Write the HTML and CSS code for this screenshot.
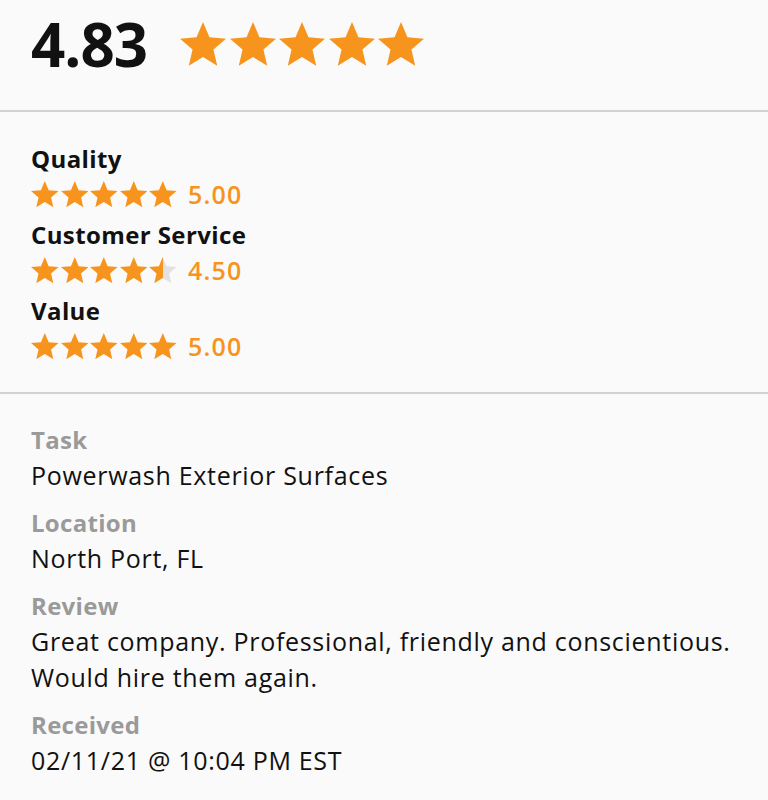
FILE: index.html
```html
<!DOCTYPE html>
<html lang="en">
<head>
<meta charset="utf-8">
<title>Review</title>
<link rel="stylesheet" href="styles.css">
</head>
<body>
<svg width="0" height="0" class="defs" aria-hidden="true">
  <defs>
    <path id="star" d="M12 17.27L18.18 21l-1.64-7.03L22 9.24l-7.19-.61L12 2 9.19 8.63 2 9.24l5.46 4.73L5.82 21z"/>
    <linearGradient id="half" x1="0" x2="1" y1="0" y2="0">
      <stop offset="50%" stop-color="#f7941d"/>
      <stop offset="50%" stop-color="#e2e2e2"/>
    </linearGradient>
  </defs>
</svg>
<main class="review">
  <section class="summary">
    <div class="score">4.83</div>
    <div class="stars stars-lg">
      <svg viewBox="2 2 20 19"><use href="#star"/></svg>
      <svg viewBox="2 2 20 19"><use href="#star"/></svg>
      <svg viewBox="2 2 20 19"><use href="#star"/></svg>
      <svg viewBox="2 2 20 19"><use href="#star"/></svg>
      <svg viewBox="2 2 20 19"><use href="#star"/></svg>
    </div>
  </section>

  <section class="categories">
    <div class="cat">
      <div class="cat-name">Quality</div>
      <div class="cat-row">
        <div class="stars stars-sm">
          <svg viewBox="2 2 20 19"><use href="#star"/></svg>
          <svg viewBox="2 2 20 19"><use href="#star"/></svg>
          <svg viewBox="2 2 20 19"><use href="#star"/></svg>
          <svg viewBox="2 2 20 19"><use href="#star"/></svg>
          <svg viewBox="2 2 20 19"><use href="#star"/></svg>
        </div>
        <span class="cat-value">5.00</span>
      </div>
    </div>
    <div class="cat">
      <div class="cat-name">Customer Service</div>
      <div class="cat-row">
        <div class="stars stars-sm">
          <svg viewBox="2 2 20 19"><use href="#star"/></svg>
          <svg viewBox="2 2 20 19"><use href="#star"/></svg>
          <svg viewBox="2 2 20 19"><use href="#star"/></svg>
          <svg viewBox="2 2 20 19"><use href="#star"/></svg>
          <svg viewBox="2 2 20 19" class="half"><use href="#star"/></svg>
        </div>
        <span class="cat-value">4.50</span>
      </div>
    </div>
    <div class="cat">
      <div class="cat-name">Value</div>
      <div class="cat-row">
        <div class="stars stars-sm">
          <svg viewBox="2 2 20 19"><use href="#star"/></svg>
          <svg viewBox="2 2 20 19"><use href="#star"/></svg>
          <svg viewBox="2 2 20 19"><use href="#star"/></svg>
          <svg viewBox="2 2 20 19"><use href="#star"/></svg>
          <svg viewBox="2 2 20 19"><use href="#star"/></svg>
        </div>
        <span class="cat-value">5.00</span>
      </div>
    </div>
  </section>

  <section class="details">
    <div class="field">
      <div class="label">Task</div>
      <div class="value">Powerwash Exterior Surfaces</div>
    </div>
    <div class="field">
      <div class="label">Location</div>
      <div class="value">North Port, FL</div>
    </div>
    <div class="field">
      <div class="label">Review</div>
      <div class="value">Great company. Professional, friendly and conscientious. Would hire them again.</div>
    </div>
    <div class="field">
      <div class="label">Received</div>
      <div class="value">02/11/21 @ 10:04 PM EST</div>
    </div>
  </section>
</main>
</body>
</html>
```

FILE: styles.css
```css
html, body {
  margin: 0;
  padding: 0;
  background: #fafafa;
}

body {
  font-family: "Open Sans", "Noto Sans", sans-serif;
  color: #111;
}

.defs {
  position: absolute;
  width: 0;
  height: 0;
}

.summary {
  box-sizing: border-box;
  height: 112px;
  padding: 12px 31px 0;
  display: flex;
  align-items: flex-start;
  gap: 33px;
  border-bottom: 2px solid #d2d2d2;
}

.score {
  font-size: 60px;
  font-weight: 700;
  line-height: 64px;
  letter-spacing: -1px;
}

.stars {
  display: flex;
  fill: #f7941d;
}

.stars-lg {
  margin-top: 10px;
  gap: 3.6px;
}

.stars-lg svg {
  width: 46px;
  height: 43.7px;
}

.stars-sm {
  gap: 2px;
}

.stars-sm svg {
  width: 27.6px;
  height: 26.2px;
}

.stars svg.half {
  fill: url(#half);
}

.categories {
  box-sizing: border-box;
  height: 282px;
  padding: 30px 31px 0;
  border-bottom: 2px solid #d2d2d2;
}

.cat-name {
  font-size: 24px;
  font-weight: 700;
  line-height: 34px;
  letter-spacing: 0.4px;
}

.cat-row {
  display: flex;
  align-items: center;
  gap: 11px;
  height: 42px;
  margin-top: -3px;
  margin-bottom: 3px;
}

.cat-value {
  color: #f7941d;
  font-size: 25px;
  font-weight: 600;
  letter-spacing: 1.2px;
}

.details {
  padding: 29px 31px 0;
}

.field {
  margin-bottom: 13px;
}

.label {
  color: #9a9a9a;
  font-size: 24px;
  font-weight: 700;
  line-height: 34px;
  letter-spacing: 0.3px;
}

.value {
  font-size: 25px;
  line-height: 36px;
  letter-spacing: 0.7px;
  color: #111;
}
```
